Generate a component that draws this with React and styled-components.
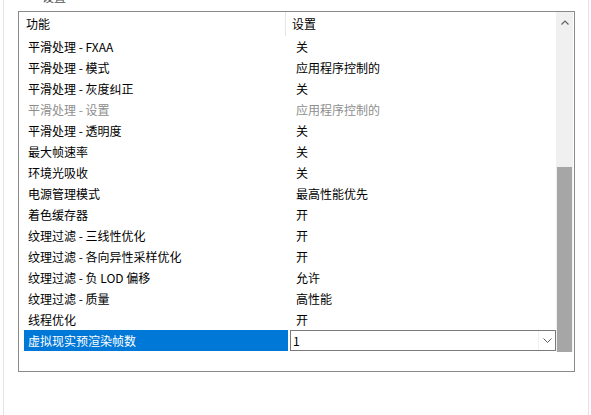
import React from "react";
import styled, { createGlobalStyle } from "styled-components";

const Global = createGlobalStyle`
  html, body { margin: 0; padding: 0; background: #ffffff; }
  body { font-family: "Noto Sans CJK SC", "Microsoft YaHei", sans-serif; font-size: 12px; color: #000; }
`;

const Page = styled.div`
  width: 591px;
  height: 415px;
  overflow: hidden;
  box-sizing: border-box;
  padding-left: 3px;
  padding-right: 2px;
`;

const Frame = styled.div`
  height: 100%;
  box-sizing: border-box;
  border-left: 1px solid #e4e4e4;
  border-right: 1px solid #e4e4e4;
  display: flex;
  flex-direction: column;
`;

const Caption = styled.div`
  height: 20px;
  line-height: 12px;
  margin-top: -9px;
  padding-left: 38px;
  color: #555;
  font-size: 12px;
  flex-shrink: 0;
`;

const ListBox = styled.div`
  margin-left: 14px;
  width: 557px;
  height: 361px;
  flex-shrink: 0;
  box-sizing: border-box;
  border: 1px solid #8a8a8a;
  display: flex;
  flex-direction: column;
`;

const Body = styled.div`
  display: flex;
  height: 340px;
`;

const Content = styled.div`
  width: 537px;
  padding-left: 5px;
  box-sizing: border-box;
`;

const HeaderRow = styled.div`
  display: grid;
  grid-template-columns: 262px 270px;
  height: 24px;
  align-items: center;
`;

const HeaderCell = styled.div`
  height: 100%;
  display: flex;
  align-items: center;
  padding-left: ${(p) => p.$pad}px;
  border-right: ${(p) => (p.$divider ? "1px solid #e5e5e5" : "none")};
  padding-bottom: 1px;
  box-sizing: border-box;
`;

const Row = styled.div`
  display: grid;
  grid-template-columns: 264px 268px;
  column-gap: 2px;
  height: 21px;
  align-items: center;
`;

const NameCell = styled.div`
  height: 100%;
  display: flex;
  align-items: center;
  padding-left: 4px;
  background: ${(p) => (p.$selected ? "#0078d7" : "transparent")};
  color: ${(p) => (p.$selected ? "#ffffff" : p.$disabled ? "#8e8e8e" : "#000")};
  white-space: pre;
`;

const ValueCell = styled.div`
  padding-left: 6px;
  color: ${(p) => (p.$disabled ? "#8e8e8e" : "#000")};
  white-space: pre;
`;

const Combo = styled.div`
  height: 21px;
  box-sizing: border-box;
  border: 1px solid #7a7a7a;
  display: flex;
  align-items: center;
  padding-left: 2px;
  width: 266px;
`;

const ComboText = styled.div`
  flex: 1;
`;

const ComboButton = styled.div`
  width: 16px;
  height: 100%;
  display: flex;
  align-items: center;
  justify-content: center;
  border-left: 1px solid #f0f0f0;
`;

const ScrollBar = styled.div`
  width: 17px;
  height: 340px;
  background: #f0f0f0;
  display: flex;
  flex-direction: column;
`;

const ScrollArrow = styled.div`
  height: 20px;
  display: flex;
  align-items: center;
  justify-content: center;
`;

const ScrollTrack = styled.div`
  flex: 1;
  display: flex;
  flex-direction: column;
  padding: 0 1px;
`;

const Thumb = styled.div`
  margin-top: auto;
  height: 185px;
  background: #a6a6a6;
`;

const rows = [
  ["平滑处理 - FXAA", "关"],
  ["平滑处理 - 模式", "应用程序控制的"],
  ["平滑处理 - 灰度纠正", "关"],
  ["平滑处理 - 设置", "应用程序控制的", true],
  ["平滑处理 - 透明度", "关"],
  ["最大帧速率", "关"],
  ["环境光吸收", "关"],
  ["电源管理模式", "最高性能优先"],
  ["着色缓存器", "开"],
  ["纹理过滤 - 三线性优化", "开"],
  ["纹理过滤 - 各向异性采样优化", "开"],
  ["纹理过滤 - 负 LOD 偏移", "允许"],
  ["纹理过滤 - 质量", "高性能"],
  ["线程优化", "开"],
];

export default function App() {
  return (
    <>
      <Global />
      <Page>
        <Frame>
          <Caption>设置</Caption>
          <ListBox>
            <Body>
              <Content>
                <HeaderRow>
                  <HeaderCell $pad={2} $divider>功能</HeaderCell>
                  <HeaderCell $pad={6}>设置</HeaderCell>
                </HeaderRow>
                {rows.map(([name, value, disabled]) => (
                  <Row key={name}>
                    <NameCell $disabled={disabled}>{name}</NameCell>
                    <ValueCell $disabled={disabled}>{value}</ValueCell>
                  </Row>
                ))}
                <Row>
                  <NameCell $selected>虚拟现实预渲染帧数</NameCell>
                  <Combo>
                    <ComboText>1</ComboText>
                    <ComboButton>
                      <svg width="9" height="5" viewBox="0 0 9 5">
                        <path d="M0.5 0.5 L4.5 4.5 L8.5 0.5" fill="none" stroke="#606060" strokeWidth="1" />
                      </svg>
                    </ComboButton>
                  </Combo>
                </Row>
              </Content>
              <ScrollBar>
                <ScrollArrow>
                  <svg width="8" height="5" viewBox="0 0 8 5">
                    <path d="M0.5 4.5 L4 1 L7.5 4.5" fill="none" stroke="#606060" strokeWidth="1.2" />
                  </svg>
                </ScrollArrow>
                <ScrollTrack>
                  <Thumb />
                </ScrollTrack>
              </ScrollBar>
            </Body>
          </ListBox>
        </Frame>
      </Page>
    </>
  );
}
